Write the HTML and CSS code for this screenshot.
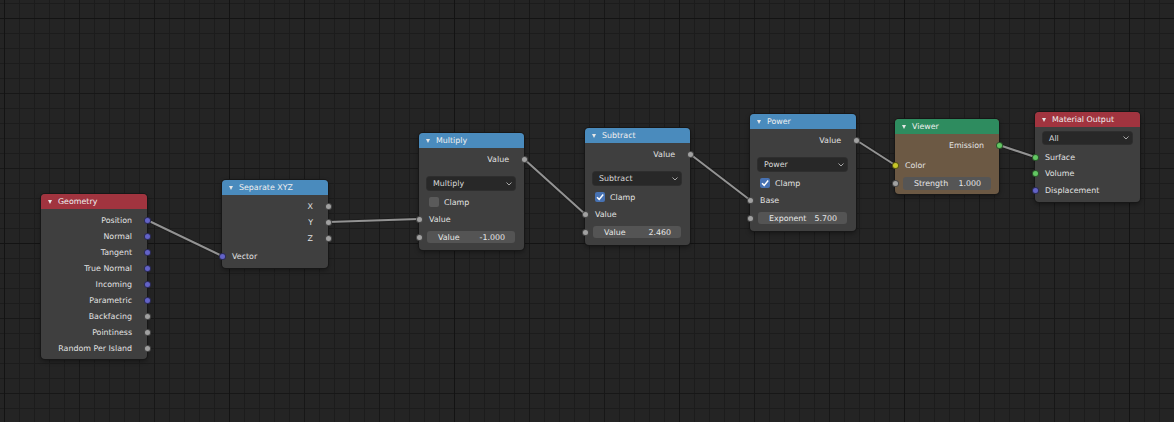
FILE: index.html
```html
<!DOCTYPE html>
<html>
<head>
<meta charset="utf-8">
<link rel="stylesheet" href="styles.css">
</head>
<body>
<div class="editor">
  <svg class="wires" width="1174" height="422" viewBox="0 0 1174 422">
    <g class="wire-edge">
      <line x1="147" y1="220" x2="222" y2="256"/>
      <line x1="328" y1="222" x2="419" y2="219"/>
      <line x1="524" y1="159" x2="585" y2="214"/>
      <line x1="690" y1="154" x2="750" y2="200"/>
      <line x1="856" y1="140" x2="895" y2="165"/>
      <line x1="999" y1="145" x2="1035" y2="157"/>
    </g>
    <g class="wire-core">
      <line x1="147" y1="220" x2="222" y2="256"/>
      <line x1="328" y1="222" x2="419" y2="219"/>
      <line x1="524" y1="159" x2="585" y2="214"/>
      <line x1="690" y1="154" x2="750" y2="200"/>
      <line x1="856" y1="140" x2="895" y2="165"/>
      <line x1="999" y1="145" x2="1035" y2="157"/>
    </g>
  </svg>

  <div class="node n-geometry">
    <div class="head red"><span class="tri"></span><span>Geometry</span></div>
    <div class="body">
      <div class="row out"><span>Position</span><i class="sock vec"></i></div>
      <div class="row out"><span>Normal</span><i class="sock vec"></i></div>
      <div class="row out"><span>Tangent</span><i class="sock vec"></i></div>
      <div class="row out"><span>True Normal</span><i class="sock vec"></i></div>
      <div class="row out"><span>Incoming</span><i class="sock vec"></i></div>
      <div class="row out"><span>Parametric</span><i class="sock vec"></i></div>
      <div class="row out"><span>Backfacing</span><i class="sock flt"></i></div>
      <div class="row out"><span>Pointiness</span><i class="sock flt"></i></div>
      <div class="row out"><span>Random Per Island</span><i class="sock flt"></i></div>
    </div>
  </div>

  <div class="node n-separate">
    <div class="head blue"><span class="tri"></span><span>Separate XYZ</span></div>
    <div class="body sep-body">
      <div class="row out"><span>X</span><i class="sock flt"></i></div>
      <div class="row out"><span>Y</span><i class="sock flt"></i></div>
      <div class="row out"><span>Z</span><i class="sock flt"></i></div>
      <div class="row in gap2"><i class="sock vec"></i><span>Vector</span></div>
    </div>
  </div>

  <div class="node math n-multiply">
    <div class="head blue"><span class="tri"></span><span>Multiply</span></div>
    <div class="body math-body">
      <div class="row out"><span>Value</span><i class="sock flt"></i></div>
      <div class="select math-select"><span>Multiply</span><svg class="chev" width="6" height="4" viewBox="0 0 6 4"><polyline points="0.5,0.5 3,3 5.5,0.5"/></svg></div>
      <div class="row check-row"><span class="check"></span><span>Clamp</span></div>
      <div class="row in gap1"><i class="sock flt"></i><span>Value</span></div>
      <div class="row field-row"><i class="sock flt"></i><div class="field"><span>Value</span><span>-1.000</span></div></div>
    </div>
  </div>

  <div class="node math n-subtract">
    <div class="head blue"><span class="tri"></span><span>Subtract</span></div>
    <div class="body math-body">
      <div class="row out"><span>Value</span><i class="sock flt"></i></div>
      <div class="select math-select"><span>Subtract</span><svg class="chev" width="6" height="4" viewBox="0 0 6 4"><polyline points="0.5,0.5 3,3 5.5,0.5"/></svg></div>
      <div class="row check-row"><span class="check on"><svg width="10" height="10" viewBox="0 0 10 10"><polyline points="2,5.2 4.2,7.4 8.2,2.6"/></svg></span><span>Clamp</span></div>
      <div class="row in gap1"><i class="sock flt"></i><span>Value</span></div>
      <div class="row field-row"><i class="sock flt"></i><div class="field"><span>Value</span><span>2.460</span></div></div>
    </div>
  </div>

  <div class="node math n-power">
    <div class="head blue"><span class="tri"></span><span>Power</span></div>
    <div class="body math-body">
      <div class="row out"><span>Value</span><i class="sock flt"></i></div>
      <div class="select math-select"><span>Power</span><svg class="chev" width="6" height="4" viewBox="0 0 6 4"><polyline points="0.5,0.5 3,3 5.5,0.5"/></svg></div>
      <div class="row check-row"><span class="check on"><svg width="10" height="10" viewBox="0 0 10 10"><polyline points="2,5.2 4.2,7.4 8.2,2.6"/></svg></span><span>Clamp</span></div>
      <div class="row in gap1"><i class="sock flt"></i><span>Base</span></div>
      <div class="row field-row"><i class="sock flt"></i><div class="field"><span>Exponent</span><span>5.700</span></div></div>
    </div>
  </div>

  <div class="node n-viewer">
    <div class="head green"><span class="tri"></span><span>Viewer</span></div>
    <div class="body viewer-body">
      <div class="row out"><span>Emission</span><i class="sock shd"></i></div>
      <div class="row in gap4"><i class="sock col"></i><span>Color</span></div>
      <div class="row field-row"><i class="sock flt"></i><div class="field tall"><span>Strength</span><span>1.000</span></div></div>
    </div>
  </div>

  <div class="node n-output">
    <div class="head red"><span class="tri"></span><span>Material Output</span></div>
    <div class="body out-body">
      <div class="select out-select"><span>All</span><svg class="chev" width="6" height="4" viewBox="0 0 6 4"><polyline points="0.5,0.5 3,3 5.5,0.5"/></svg></div>
      <div class="row in gap5"><i class="sock shd"></i><span>Surface</span></div>
      <div class="row in"><i class="sock shd"></i><span>Volume</span></div>
      <div class="row in gap1"><i class="sock vec"></i><span>Displacement</span></div>
    </div>
  </div>
</div>
</body>
</html>
```
FILE: styles.css
```css
html, body {
  margin: 0;
  padding: 0;
  background: #232323;
}

body {
  font-family: "DejaVu Sans", sans-serif;
  font-size: 7.9px;
}

.editor {
  position: relative;
  width: 1174px;
  height: 422px;
  overflow: hidden;
  background-color: #242424;
  background-image:
    linear-gradient(to right, #131313 1px, transparent 1px),
    linear-gradient(to bottom, #131313 1px, transparent 1px),
    linear-gradient(to right, #171717 1px, transparent 1px),
    linear-gradient(to bottom, #171717 1px, transparent 1px),
    linear-gradient(to right, #1c1c1c 1px, transparent 1px),
    linear-gradient(to bottom, #1c1c1c 1px, transparent 1px);
  background-size: 225px 225px, 225px 225px, 75px 75px, 75px 75px, 15px 15px, 15px 15px;
  background-position: 4px 0, 0 18px, 4px 0, 0 18px, 4px 0, 0 3px;
}

.wires {
  position: absolute;
  left: 0;
  top: 0;
}

.wire-edge line {
  stroke: #1e1e1e;
  stroke-width: 4;
  stroke-linecap: round;
}

.wire-core line {
  stroke: #939393;
  stroke-width: 2;
  stroke-linecap: round;
}

/* ---------- nodes ---------- */
.node {
  position: absolute;
  background: #3f3f3f;
  border-radius: 4px;
  color: #e2e2e2;
  box-shadow: 0 0 0 1px #171717, 0 2px 5px rgba(0, 0, 0, 0.45);
}

.n-geometry { left: 41px;   top: 194px; width: 106px; }
.n-separate { left: 222px;  top: 180px; width: 106px; }
.n-multiply { left: 419px;  top: 133px; width: 105px; }
.n-subtract { left: 585px;  top: 128px; width: 105px; }
.n-power    { left: 750px;  top: 114px; width: 106px; }
.n-viewer   { left: 895px;  top: 119px; width: 104px; background: #6c5944; }
.n-output   { left: 1035px; top: 112px; width: 105px; }

.head {
  height: 15px;
  border-radius: 4px 4px 0 0;
  display: flex;
  align-items: center;
  padding-left: 7px;
  color: #f0f0f0;
  white-space: nowrap;
}

.head.red   { background: #a1343f; }
.head.blue  { background: #4a8bbd; }
.head.green { background: #2e8c5f; }

.tri {
  width: 0;
  height: 0;
  border-left: 2.5px solid transparent;
  border-right: 2.5px solid transparent;
  border-top: 4px solid #e6e6e6;
  margin-right: 6px;
  margin-top: 1px;
}

.body {
  padding: 3px 0 3px;
}

.sep-body    { padding-bottom: 4px; }
.math-body   { padding-bottom: 5px; }
.out-body    { padding-bottom: 4px; }

.row {
  position: relative;
  height: 16px;
  display: flex;
  align-items: center;
  white-space: nowrap;
}

.row.out {
  justify-content: flex-end;
  padding-right: 15px;
}

.row.in {
  padding-left: 10px;
}

.gap1 { margin-top: 1px; }
.gap2 { margin-top: 2px; }
.gap4 { margin-top: 4px; }
.gap5 { margin-top: 5px; }

/* sockets */
.sock {
  position: absolute;
  top: 50%;
  width: 7px;
  height: 7px;
  margin-top: -3.5px;
  border-radius: 50%;
  box-sizing: border-box;
  border: 1px solid rgba(0, 0, 0, 0.55);
}

.out .sock { right: -3.5px; }
.in .sock,
.field-row .sock { left: -3.5px; }

.sock.vec { background: #6363c7; }
.sock.flt { background: #a1a1a1; }
.sock.col { background: #c7c729; }
.sock.shd { background: #63c763; }

/* dropdown */
.select {
  height: 13px;
  margin: 0 9px 0 8px;
  background: #282828;
  border-radius: 3px;
  display: flex;
  align-items: center;
  justify-content: space-between;
  padding: 0 3px 0 6px;
  color: #d9d9d9;
  box-shadow: 0 0 0 1px #2e2e2e;
}

.math-select { margin-top: 10px; }
.out-select  { margin-top: 2px; height: 12px; margin-right: 8px; }

.chev polyline {
  fill: none;
  stroke: #a8a8a8;
  stroke-width: 1;
}

/* checkbox */
.check-row {
  margin-top: 4px;
  padding-left: 10px;
}

.check {
  width: 10px;
  height: 10px;
  border-radius: 2px;
  background: #5a5a5a;
  margin-right: 5px;
  display: flex;
}

.check.on {
  background: #4772b3;
}

.check svg polyline {
  fill: none;
  stroke: #ffffff;
  stroke-width: 1.5;
}

/* value fields */
.field-row {
  margin-top: 2px;
}

.field {
  flex: 1;
  height: 12px;
  margin: 0 9px 0 8px;
  background: #545454;
  border-radius: 3px;
  display: flex;
  align-items: center;
  justify-content: space-between;
  padding: 0 10px 0 11px;
  color: #e8e8e8;
}

.field.tall {
  height: 13px;
  margin-right: 8px;
  background: #555555;
}
```
